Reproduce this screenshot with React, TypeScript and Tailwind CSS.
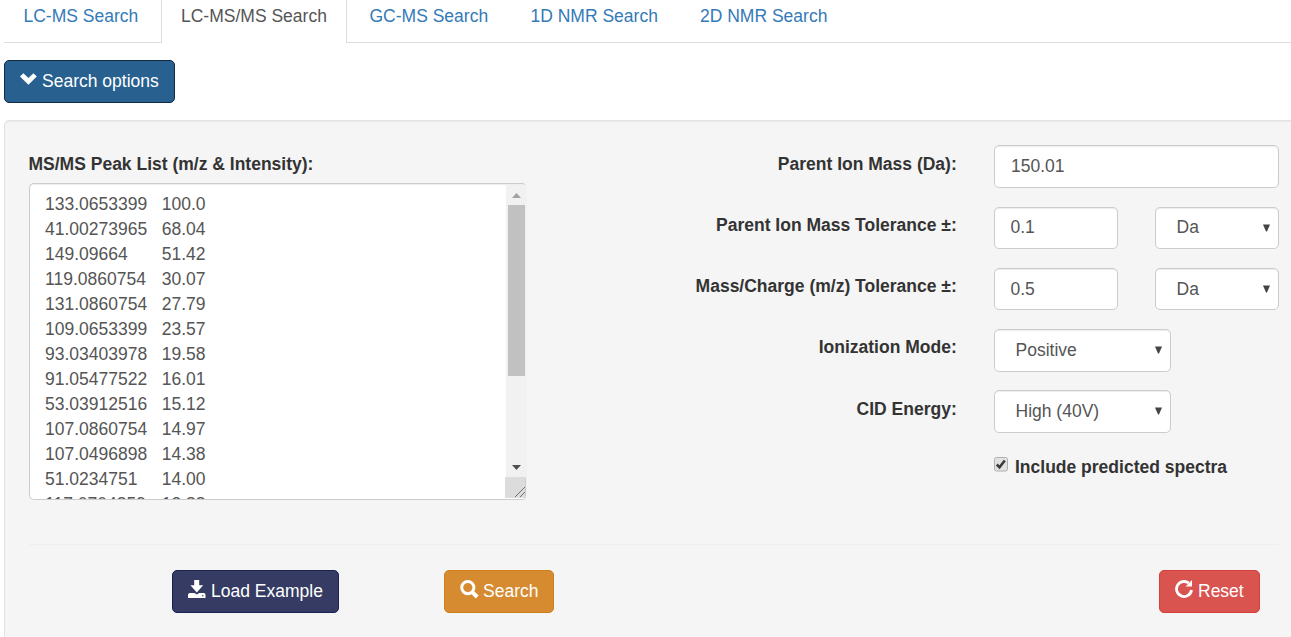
import React from "react";

const peaks = `133.0653399\t100.0
41.00273965\t68.04
149.09664\t51.42
119.0860754\t30.07
131.0860754\t27.79
109.0653399\t23.57
93.03403978\t19.58
91.05477522\t16.01
53.03912516\t15.12
107.0860754\t14.97
107.0496898\t14.38
51.0234751\t14.00
117.0704859\t13.88`;

const field =
  "block rounded-[5px] border border-[#ccc] bg-white text-[#555] shadow-[inset_0_1px_1px_rgba(0,0,0,0.075)] outline-none appearance-none";

function Label({ children, className = "pt-[6px]" }: { children: React.ReactNode; className?: string }) {
  return <div className={`pr-[37.25px] text-right font-bold leading-[25px] text-[#333] ${className}`}>{children}</div>;
}

function Select({ value, className, textClass = "pb-px" }: { value: string; className: string; textClass?: string }) {
  return (
    <div className={`relative ${className}`}>
      <select defaultValue={value} className={`${field} h-full w-full pl-[20.5px] ${textClass}`}>
        <option>{value}</option>
      </select>
      <svg className="absolute right-[8px] top-[17px]" width="8" height="8" viewBox="0 0 8 8">
        <path d="M0 0.5h7L4 7.5H3z" fill="#444" />
      </svg>
    </div>
  );
}

export default function App() {
  return (
    <div className="h-[637px] w-[1291px] overflow-hidden bg-white font-['Liberation_Sans',Arial,sans-serif] text-[17.5px] leading-[25px] text-[#333]">
      <nav className="ml-1 flex h-[43px] text-[#337ab7]">
        <div className="w-[157px] border-b border-[#ddd] pl-[19.5px] pt-[4px]">LC-MS Search</div>
        <div className="w-[186px] border-x border-[#ddd] pl-[19px] pt-[4px] text-[#555]">LC-MS/MS Search</div>
        <div className="flex grow border-b border-[#ddd] pl-[22.5px] pt-[4px]">
          <span className="w-[161px]">GC-MS Search</span>
          <span className="w-[169.5px]">1D NMR Search</span>
          <span>2D NMR Search</span>
        </div>
      </nav>

      <button className="ml-1 mt-[17px] flex h-[43px] w-[171px] items-center rounded-[5px] border border-[#122b40] bg-[#286090] pl-[15px] text-white">
        <svg className="-mt-[6px] mr-[5px]" width="17" height="12" viewBox="0 0 17 12">
          <path d="M0 3.6L3.4 0.2 8.4 5 13.4 0.2 16.8 3.6 8.4 11.8z" fill="#fff" />
        </svg>
        Search options
      </button>

      <section className="ml-1 mt-[17px] h-[540px] w-[1310px] rounded-[5px] border border-[#e3e3e3] bg-[#f5f5f5] pl-6 pt-6 shadow-[inset_0_1px_1px_rgba(0,0,0,0.05)]">
        <div className="flex h-[400px] w-[1250px] border-b border-[#eee]">
          <div className="w-[500px] pt-[7px]">
            <div className="-ml-[0.5px] font-bold">MS/MS Peak List (m/z &amp; Intensity):</div>
            <div className="mt-[6px] flex h-[317px] w-[498px] overflow-hidden rounded-[5px] border border-[#ccc] border-r-[#f1f1f1] bg-white shadow-[inset_0_1px_1px_rgba(0,0,0,0.075)]">
              <pre className="h-full grow overflow-hidden pl-[15px] pt-[8px] font-['Liberation_Sans',Arial,sans-serif] text-[#555] [tab-size:8]">{peaks}</pre>
              <svg className="shrink-0" width="21" height="315" viewBox="0 0 21 315">
                <path d="M1 1h20v292H1z" fill="#f1f1f1" />
                <path d="M3 21h17v171H3z" fill="#c1c1c1" />
                <path d="M7 14l4.5-5 4.5 5z" fill="#a3a3a3" />
                <path d="M7 281h9l-4.5 5z" fill="#505050" />
                <path d="M0 293h21v21H0z" fill="#dcdcdc" />
                <path d="M20.5 295v20" stroke="#ccc" />
                <path d="M10 313l10-10M15 313l5-5" stroke="#555" strokeWidth="0.8" />
              </svg>
            </div>
          </div>

          <div className="grid w-[750px] grid-cols-[465px_285px] grid-rows-[62px_61px_61px_61px_61px_50px]">
            <Label className="pt-[7px]">Parent Ion Mass (Da):</Label>
            <input defaultValue="150.01" className={`${field} h-[43px] w-[285px] pb-px pl-[16px]`} />
            <Label>Parent Ion Mass Tolerance ±:</Label>
            <div className="flex justify-between">
              <input defaultValue="0.1" className={`${field} h-[42px] w-[124px] pb-px pl-[15.5px]`} />
              <Select value="Da" className="h-[42px] w-[124px]" />
            </div>
            <Label>Mass/Charge (m/z) Tolerance ±:</Label>
            <div className="flex justify-between">
              <input defaultValue="0.5" className={`${field} h-[42px] w-[124px] pl-[15.5px]`} />
              <Select value="Da" className="h-[42px] w-[124px]" textClass="pt-px" />
            </div>
            <Label>Ionization Mode:</Label>
            <Select value="Positive" className="h-[43px] w-[177px]" />
            <Label className="pt-[7px]">CID Energy:</Label>
            <Select value="High (40V)" className="h-[43px] w-[177px]" />
            <span />
            <label className="flex pt-[4px] font-bold">
              <svg className="mr-[7px] mt-[2px]" width="14" height="15" viewBox="0 0 14 15">
                <rect x="0.5" y="0.5" width="13" height="13.5" rx="2" fill="#e2e2e2" stroke="#b0b0b0" />
                <path d="M2.8 7.5l2.7 2.8L10.8 3.5" fill="none" stroke="#3c3c3c" strokeWidth="2.6" />
              </svg>
              Include predicted spectra
            </label>
          </div>
        </div>

        <div className="flex pl-[143px] pt-[25px] text-white">
          <button className="flex h-[43px] w-[167px] items-center rounded-[5px] border border-[#1b2150] bg-[#353b62] pl-[15px]">
            <svg className="-mt-[5px] mr-[5px]" width="18" height="18" viewBox="0 0 18 18">
              <path d="M6.2 0h5v5.2h4L8.8 12.4 2.4 5.2h3.8zM1.2 13h5.2l2.4 1.4 2.4-1.4h5.2l1.1 1.4V18H0v-3.6z" fill="#fff" />
              <path d="M14 15.2h1.6v1H14z" fill="#353b62" />
            </svg>
            Load Example
          </button>
          <button className="ml-[105px] flex h-[43px] w-[110px] items-center rounded-[5px] border border-[#d07d1c] bg-[#d68b30] pl-[15px]">
            <svg className="-mt-[5px] mr-[4px]" width="19" height="19" viewBox="0 0 19 19">
              <circle cx="7.8" cy="7.6" r="6.1" fill="none" stroke="#fff" strokeWidth="3" />
              <path d="M11.8 11.6l5.4 5.4" stroke="#fff" strokeWidth="4" />
            </svg>
            Search
          </button>
          <button className="ml-[605px] flex h-[43px] w-[101px] items-center rounded-[5px] border border-[#d43f3a] bg-[#d9534f] pl-[15px]">
            <svg className="-mt-[5px] mr-[5px]" width="18" height="18" viewBox="0 0 18 18">
              <path d="M13.8 3.2A7.5 7.5 0 1 0 16.5 10" fill="none" stroke="#fff" strokeWidth="2.8" />
              <path d="M17 0v6.4H10.6z" fill="#fff" />
            </svg>
            Reset
          </button>
        </div>
      </section>
    </div>
  );
}
